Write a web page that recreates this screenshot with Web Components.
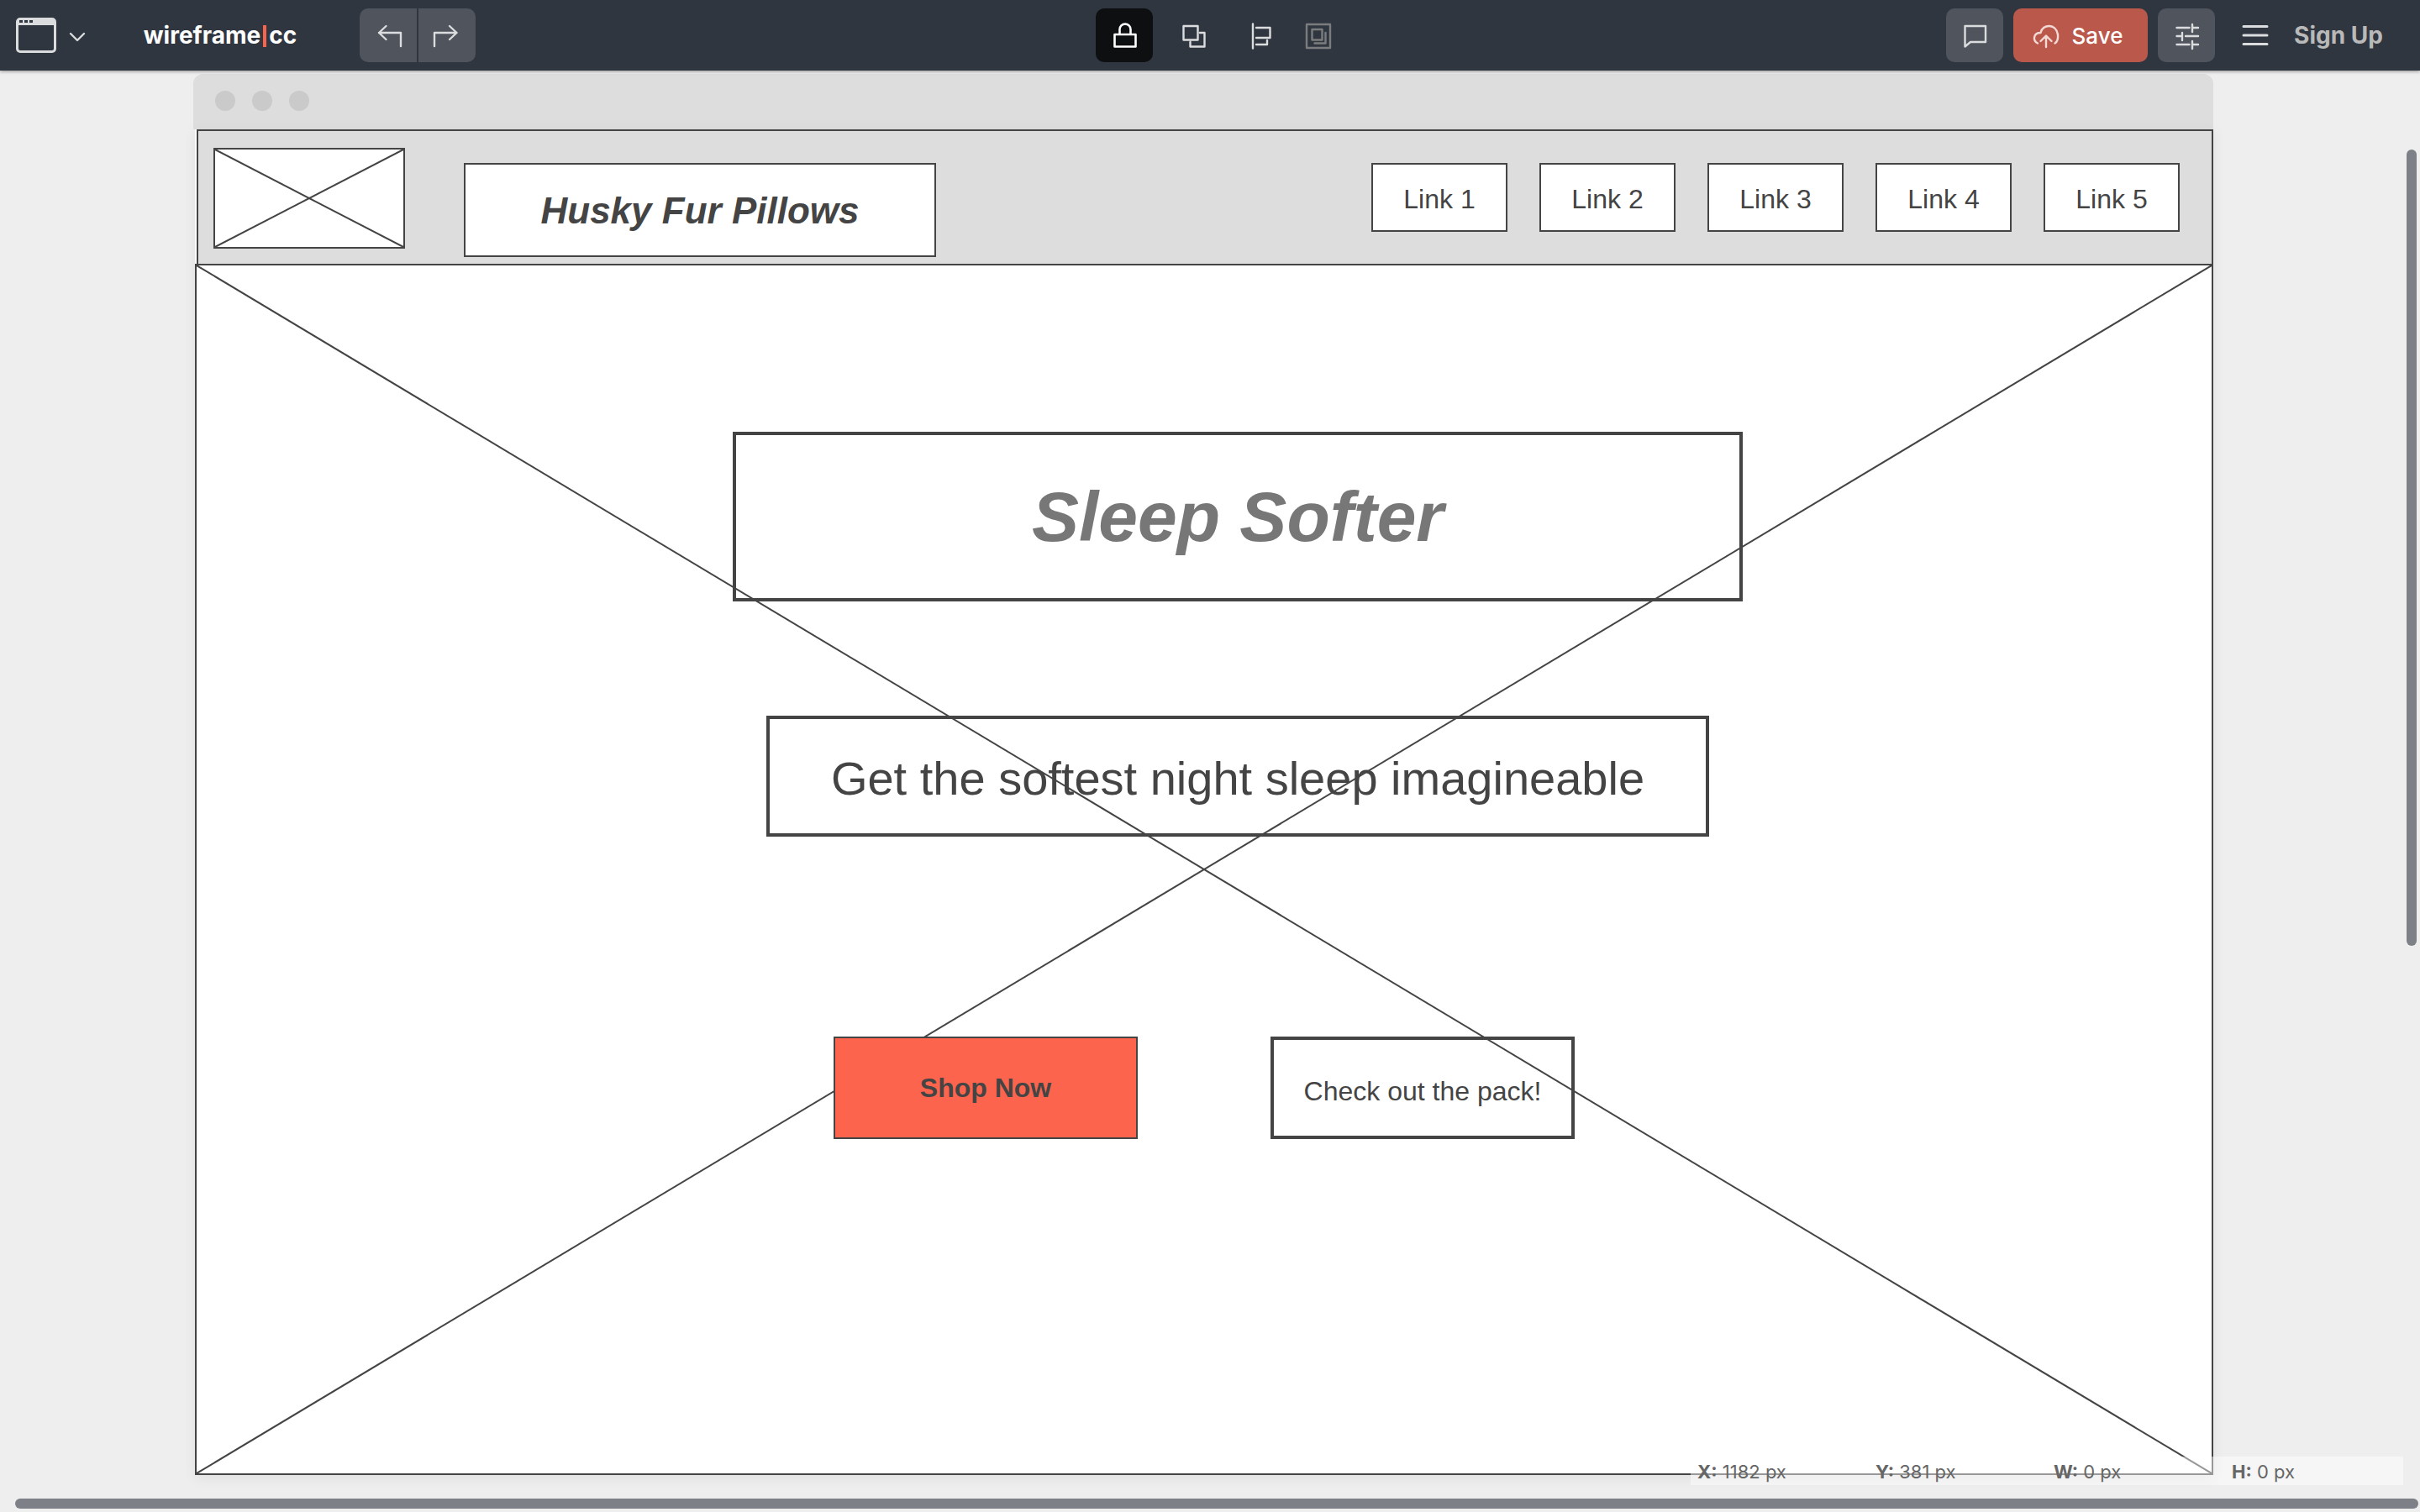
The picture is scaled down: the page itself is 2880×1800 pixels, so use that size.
<!DOCTYPE html>
<html lang="en">
<head>
<meta charset="utf-8">
<title>wireframe|cc</title>
<style>
  html, body { margin: 0; height: 100%; }
  body { background: #eee; font-family: Inter, "Liberation Sans", sans-serif; overflow: hidden; }
</style>
</head>
<body>
<wf-app></wf-app>

<script>
const define = (name, html) => {
  const t = document.createElement('template');
  t.innerHTML = html;
  customElements.define(name, class extends HTMLElement {
    constructor() {
      super();
      this.attachShadow({ mode: 'open' }).append(t.content.cloneNode(true));
    }
  });
};

/* Toolbar icons, all drawn in a 34px box */
const ICONS = {
  app: '<path fill="currentColor" fill-rule="evenodd" d="M5 0h38a5 5 0 0 1 5 5v32a5 5 0 0 1-5 5H5a5 5 0 0 1-5-5V5a5 5 0 0 1 5-5zM3 9v28a2 2 0 0 0 2 2h38a2 2 0 0 0 2-2V9zM4 3v3h4V3zM10 3v3h4V3zM16 3v3h4V3z"/>',
  chevron: '<path d="M1 1l8 8 8-8"/>',
  undo: '<path d="M14.500 6L6 14l8.500 8M6 14h26v16"/>',
  redo: '<path d="M20 6l8.500 8L20 22M28.500 14H2v16"/>',
  lock: '<path d="M5.500 16h25v14.500h-25zM11.500 16v-6a6.500 6.500 0 0 1 13 0v6" stroke-width="2.600"/>',
  layers: '<path d="M5.500 6h17v16.500h-17zM25 14h5.500v16.500h-17V25"/>',
  align: '<path d="M6 3.500v29M10 8h16.500v12H10M10 28h13V23"/>',
  group: '<path d="M3 4h28v28H3zM9.500 10h12v12.500h-12zM25.500 14v12.500H12.500"/>',
  comment: '<path d="M5.500 6H30v19H12l-6.500 5.500z"/>',
  cloud: '<path d="M7 26.500C.5 23 2 14 10.500 14C13 3 29 3 31 16c.5 5-1 9-3.500 10.500M17 31V18M10.500 24l6.500-6.500 6.500 6.500"/>',
  sliders: '<path d="M5.500 8h15M24 8h7M24 4v9M5.500 18h6M12 14v9M16 18h15M5.500 28h15M24 28h7M24 24v9"/>',
  menu: '<path d="M3 6.500h28M3 17h28M3 27.500h28" stroke-width="3"/>'
};
customElements.define('wf-icon', class extends HTMLElement {
  connectedCallback() {
    const name = this.getAttribute('name');
    const box = { app: '48 42', chevron: '18 10' }[name] || '34 34';
    const [w, h] = box.split(' ');
    if (!this.shadowRoot) this.attachShadow({ mode: 'open' });
    this.shadowRoot.innerHTML = `<style>
      :host { display: block; flex: none; }
      svg { display: block; overflow: visible; fill: none; stroke: currentColor; stroke-width: 2.400;
            stroke-linecap: round; stroke-linejoin: round; }
      .app { stroke: none; }
    </style><svg class="${name}" width="${w}" height="${h}" viewBox="0 0 ${box}" aria-hidden="true">${ICONS[name]}</svg>`;
  }
});

define('wf-topbar', `<style>
  :host { display: grid; grid-template-columns: 1fr auto 1fr; align-items: center; height: 84px; flex: none;
          background: #303640; color: #dadcdd; box-shadow: 0 1px 4px rgba(0,0,0,.4); position: relative; z-index: 2; }
  .part { display: flex; align-items: center; }
  button, a { font: inherit; color: inherit; background: none; border: 0; padding: 0; margin: 0; text-decoration: none;
              display: flex; align-items: center; justify-content: center; }
  .left { padding-left: 19px; }
  .app { gap: 16px; }
  .app wf-icon + wf-icon { padding-top: 4px; }
  .brand { width: 184px; margin-left: 69px; font-size: 28px; line-height: 36px; font-weight: 700; color: #fff; }
  .brand i { width: 4px; height: 26px; margin: 2px 3px 0; background: #fb644c; }
  .history { display: flex; gap: 2px; margin-left: 74px; border-radius: 10px; overflow: hidden; }
  .tile { width: 68px; height: 64px; background: #50545d; }
  .box { border-radius: 10px; }
  .center { gap: 14px; padding-left: 12px; }
  .tool { width: 68px; height: 64px; border-radius: 10px; }
  .tool.on { background: #0d0f11; color: #fff; }
  .tool.slim { width: 38px; color: #7b7c7e; }
  .right { justify-content: flex-end; gap: 12px; padding-right: 43px; }
  .save { box-sizing: border-box; width: 160px; height: 64px; padding-right: 8px; border-radius: 10px;
          background: #bb584c; color: #fff; gap: 14px; font-size: 26px; font-weight: 500; }
  .save wf-icon { color: #f3d9d6; }
  .menu { margin-left: 19px; }
  .sign { width: 108px; margin-left: 16px; font-size: 28px; font-weight: 700; color: #b9b9b9; white-space: nowrap; }
</style>
<div class="part left">
  <button class="app" aria-label="Project"><wf-icon name="app"></wf-icon><wf-icon name="chevron"></wf-icon></button>
  <a class="brand" href="#"><span>wireframe</span><i></i><span>cc</span></a>
  <div class="history">
    <button class="tile" aria-label="Undo"><wf-icon name="undo"></wf-icon></button>
    <button class="tile" aria-label="Redo"><wf-icon name="redo"></wf-icon></button>
  </div>
</div>
<div class="part center">
  <button class="tool on" aria-label="Lock"><wf-icon name="lock"></wf-icon></button>
  <button class="tool" aria-label="Arrange"><wf-icon name="layers"></wf-icon></button>
  <button class="tool" aria-label="Align"><wf-icon name="align"></wf-icon></button>
  <button class="tool slim" aria-label="Group" disabled><wf-icon name="group"></wf-icon></button>
</div>
<div class="part right">
  <button class="tile box" aria-label="Comments"><wf-icon name="comment"></wf-icon></button>
  <button class="save"><wf-icon name="cloud"></wf-icon><span>Save</span></button>
  <button class="tile box" aria-label="Settings"><wf-icon name="sliders"></wf-icon></button>
  <button class="menu" aria-label="Menu"><wf-icon name="menu"></wf-icon></button>
  <a class="sign" href="#">Sign Up</a>
</div>`);

/* Diagonal cross that fills a placeholder box */
define('wf-cross', `<style>
  :host { position: absolute; inset: 0; pointer-events: none; }
  svg { display: block; width: 100%; height: 100%; }
  line { stroke: #444; stroke-width: 2; vector-effect: non-scaling-stroke; }
</style>
<svg viewBox="0 0 100 100" preserveAspectRatio="none" aria-hidden="true">
  <line x1="0" y1="0" x2="100" y2="100"/><line x1="100" y1="0" x2="0" y2="100"/></svg>`);

define('wf-frame', `<style>
  :host { display: flex; flex-direction: column; }
  .bar { display: flex; align-items: center; gap: 20px; height: 66px; box-sizing: border-box; padding: 0 26px 2px;
         background: #ddd; border-radius: 12px 12px 0 0; }
  .bar i { width: 24px; height: 24px; border-radius: 50%; background: #cacaca; }
  .page { flex: 1; display: flex; flex-direction: column; margin-left: 2px; background: #fff;
          box-shadow: 0 4px 16px rgba(0,0,0,.06); }
</style>
<div class="bar"><i></i><i></i><i></i></div>
<div class="page"><slot></slot></div>`);

define('wf-header', `<style>
  :host { display: flex; align-items: flex-start; box-sizing: border-box; height: 162px; margin-left: 2px;
          padding: 20px 38px 0 18px; background: #ddd; border: 2px solid #444; color: #444;
          font-family: "Liberation Sans", Arial, sans-serif; }
  .logo { position: relative; box-sizing: border-box; width: 228px; height: 120px; background: #fff; border: 2px solid #444; }
  h1 { box-sizing: border-box; width: 562px; height: 112px; margin: 18px 0 0 70px; padding-top: 2px;
       display: flex; align-items: center; justify-content: center; background: #fff; border: 2px solid #444;
       font-size: 44px; font-style: italic; font-weight: bold; }
  nav { display: flex; gap: 38px; margin: 18px 0 0 auto; }
  a { box-sizing: border-box; width: 162px; height: 82px; padding-top: 4px; display: flex; align-items: center;
      justify-content: center; background: #fff; border: 2px solid #444; color: inherit; text-decoration: none; font-size: 32px; }
</style>
<div class="logo"><wf-cross></wf-cross></div>
<h1>Husky Fur Pillows</h1>
<nav><a href="#">Link 1</a><a href="#">Link 2</a><a href="#">Link 3</a><a href="#">Link 4</a><a href="#">Link 5</a></nav>`);

define('wf-hero', `<style>
  :host { flex: 1; position: relative; display: flex; flex-direction: column; align-items: center; box-sizing: border-box;
          margin-top: -2px; padding-top: 198px; border: 2px solid #444; color: #444;
          font-family: "Liberation Sans", Arial, sans-serif; }
  .copy { position: relative; display: flex; flex-direction: column; align-items: center; padding-left: 80px; }
  h2, p, button { box-sizing: border-box; margin: 0; display: flex; align-items: center; justify-content: center;
                  border: 4px solid #444; font-family: inherit; color: inherit; background: none; }
  h2 { width: 1202px; height: 202px; font-size: 84px; font-style: italic; color: #777; }
  p { width: 1122px; height: 144px; margin-top: 136px; padding-top: 4px; font-size: 56px; }
  .actions { position: relative; display: flex; gap: 158px; margin-top: 238px; }
  button { width: 362px; height: 122px; padding: 8px 0 0; font-size: 32px; }
  .primary { background: #fd644d; border-width: 2px; padding: 0; font-weight: bold; }
</style>
<wf-cross></wf-cross>
<div class="copy">
  <h2>Sleep Softer</h2>
  <p>Get the softest night sleep imagineable</p>
</div>
<div class="actions">
  <button class="primary">Shop Now</button>
  <button>Check out the pack!</button>
</div>`);

define('wf-status', `<style>
  :host { position: absolute; right: 20px; bottom: 32px; display: flex; height: 34px; background: rgba(255,255,255,.45);
          color: #666; font-size: 22px; line-height: 36px; }
  span { box-sizing: border-box; width: 212px; padding-left: 8px; white-space: nowrap; }
  b { font-weight: 700; }
</style>
<span><b>X:</b> 1182 px</span><span><b>Y:</b> 381 px</span><span><b>W:</b> 0 px</span><span><b>H:</b> 0 px</span>`);

define('wf-app', `<style>
  :host { display: flex; flex-direction: column; height: 100vh; position: relative; overflow: hidden; }
  wf-frame { flex: 1; margin: 4px 246px 44px 230px; }
  .thumb { position: absolute; border-radius: 6px; background: #7d8087; }
  .v { right: 4px; top: 178px; width: 12px; height: 948px; }
  .h { left: 18px; right: 2px; bottom: 4px; height: 12px; }
</style>
<wf-topbar></wf-topbar>
<wf-frame><wf-header></wf-header><wf-hero></wf-hero></wf-frame>
<wf-status></wf-status>
<div class="thumb v"></div><div class="thumb h"></div>`);
</script>
</body>
</html>
